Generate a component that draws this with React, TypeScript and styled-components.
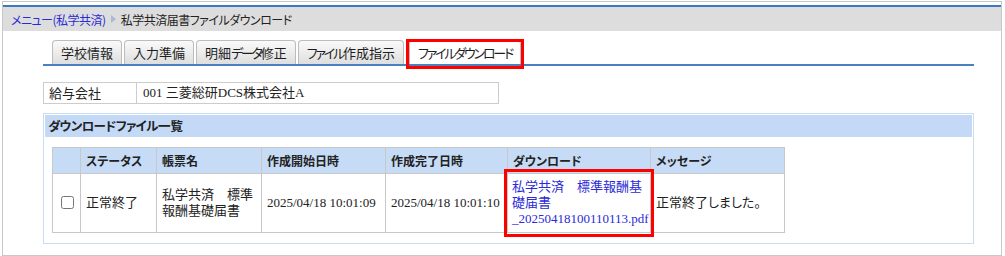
import React from "react"
import styled, { createGlobalStyle } from "styled-components"

const GlobalStyle = createGlobalStyle`
  body {
    margin: 1px 3px 0 2px;
    background: #ffffff;
    font-family: "Noto Sans CJK JP", "Noto Sans", sans-serif;
    font-size: 13px;
    color: #222222;
    font-feature-settings: "palt";
  }
`

const tabs = ["学校情報", "入力準備", "明細データ修正", "ファイル作成指示", "ファイルダウンロード"]

const columns = [
  { label: "", width: 28 },
  { label: "ステータス", width: 76 },
  { label: "帳票名", width: 105 },
  { label: "作成開始日時", width: 124 },
  { label: "作成完了日時", width: 122 },
  { label: "ダウンロード", width: 143 },
  { label: "メッセージ", width: 134 },
]

// katakana runs are set tighter, like the narrow kana of the original UI font
const tight = (text: string) =>
  text
    .split(/([\u30A0-\u30FF]+)/)
    .map((part, i) => (/[\u30A0-\u30FF]/.test(part) ? <Kana key={i}>{part}</Kana> : part))

export default function App() {
  return (
    <>
      <GlobalStyle />
      <Frame>
        <Breadcrumb>
          <CrumbLink>メニュー(私学共済)</CrumbLink>
          <Separator viewBox="0 0 5 8">
            <path d="M0 0 L5 4 L0 8 Z" fill="#a9bbd6" />
          </Separator>
          <span>私学共済届書ファイルダウンロード</span>
        </Breadcrumb>

        <Content>
          <TabBar>
            {tabs.map((t, i) => (
              <Tab key={t} active={i === tabs.length - 1}>
                {tight(t)}
              </Tab>
            ))}
          </TabBar>

          <InfoTable>
            <tbody>
              <tr>
                <InfoLabel>給与会社</InfoLabel>
                <InfoValue>001 三菱総研DCS株式会社A</InfoValue>
              </tr>
            </tbody>
          </InfoTable>

          <Section>
            <SectionHeader>{tight("ダウンロードファイル一覧")}</SectionHeader>
            <ListTable>
              <colgroup>
                {columns.map((c, i) => (
                  <col key={i} style={{ width: c.width }} />
                ))}
              </colgroup>
              <thead>
                <tr>
                  {columns.map((c, i) => (
                    <Th key={i}>{c.label}</Th>
                  ))}
                </tr>
              </thead>
              <tbody>
                <tr>
                  <CheckCell>
                    <Check type="checkbox" />
                  </CheckCell>
                  <Td>正常終了</Td>
                  <Td>私学共済　標準報酬基礎届書</Td>
                  <Td>2025/04/18 10:01:09</Td>
                  <Td>2025/04/18 10:01:10</Td>
                  <DownloadCell>
                    <FileLink>
                      私学共済　標準報酬基礎届書
                      <br />
                      <FileName>_20250418100110113.pdf</FileName>
                    </FileLink>
                    <Highlight />
                  </DownloadCell>
                  <Td>正常終了しました。</Td>
                </tr>
              </tbody>
            </ListTable>
          </Section>
        </Content>
      </Frame>
    </>
  )
}

const Frame = styled.div`
  border: 1px solid #c8c8c8;
  padding: 3px 0 11px;
`

const Breadcrumb = styled.div`
  display: flex;
  align-items: center;
  gap: 5px;
  height: 24px;
  padding-left: 8px;
  border-top: 2px solid #3c78c2;
  background: #dddddd;
  font-size: 12px;
  letter-spacing: -0.5px;
  color: #222222;
`

const CrumbLink = styled.a`
  color: #2a2ad8;
  cursor: pointer;
`

const Separator = styled.svg`
  width: 5px;
  height: 8px;
`

const Content = styled.div`
  margin: 9px 27px 0 40px;
`

const TabBar = styled.div`
  display: flex;
  gap: 2px;
  padding-left: 9px;
  border-bottom: 2px solid #4a80c0;
`

const Kana = styled.span`
  letter-spacing: -2.2px;
`

const Tab = styled.div<{ active?: boolean }>`
  position: relative;
  height: 23px;
  line-height: 23px;
  padding: 0 8px;
  border: 1px solid #bcbcbc;
  border-bottom: none;
  border-radius: 4px 4px 0 0;
  background: ${(p) =>
    p.active ? "#ffffff" : "linear-gradient(#fafafa, #dedede)"};
  margin-left: ${(p) => (p.active ? "3px" : "0")};
  font-size: 13px;
  color: #1e1e1e;
  white-space: nowrap;

  ${(p) =>
    p.active &&
    `
    &::after {
      content: "";
      position: absolute;
      top: -2px;
      left: -4px;
      right: -4px;
      bottom: -5px;
      border: 3px solid #ff0000;
    }
  `}
`

const InfoTable = styled.table`
  margin-top: 16px;
  width: 456px;
  border-collapse: collapse;
  font-family: "Liberation Serif", "Noto Sans CJK JP", serif;
`

const InfoLabel = styled.td`
  width: 82px;
  padding: 2px 5px;
  line-height: 16px;
  border: 1px solid #cccccc;
  font-family: "Noto Sans CJK JP", sans-serif;
`

const InfoValue = styled.td`
  padding: 2px 6px;
  line-height: 16px;
  border: 1px solid #cccccc;
`

const Section = styled.div`
  margin-top: 9px;
  border: 1px solid #c8dcf4;
  padding: 1px 1px 10px;
`

const SectionHeader = styled.div`
  height: 22px;
  line-height: 22px;
  padding-left: 3px;
  background: #c3d9f6;
  font-size: 12.5px;
  font-weight: bold;
  color: #222222;

  ${Kana} {
    letter-spacing: -0.6px;
  }
`

const ListTable = styled.table`
  margin: 10px 0 0 7px;
  border-collapse: collapse;
  table-layout: fixed;
  width: 732px;
  font-family: "Liberation Serif", "Noto Sans CJK JP", serif;
`

const Th = styled.th`
  height: 25px;
  padding: 0 5px;
  text-align: left;
  background: #c6dcf6;
  border: 1px solid #c8c8c8;
  font-family: "Noto Sans CJK JP", sans-serif;
  font-size: 12px;
  font-weight: bold;
  line-height: 16px;
`

const Td = styled.td`
  padding: 5px 5px;
  border: 1px solid #c8c8c8;
  line-height: 16px;
  vertical-align: middle;
`

const CheckCell = styled(Td)`
  padding: 0;
  text-align: center;
`

const Check = styled.input`
  width: 13px;
  height: 13px;
  margin: 3px 0 0 1px;
`

const DownloadCell = styled(Td)`
  position: relative;
  padding: 5px 4px;
`

const FileLink = styled.a`
  color: #2a2ad8;
  cursor: pointer;
`

const FileName = styled.span`
  white-space: nowrap;
`

const Highlight = styled.span`
  position: absolute;
  top: -5px;
  left: -4px;
  right: -4px;
  bottom: -5px;
  border: 3px solid #ff0000;
  pointer-events: none;
`
